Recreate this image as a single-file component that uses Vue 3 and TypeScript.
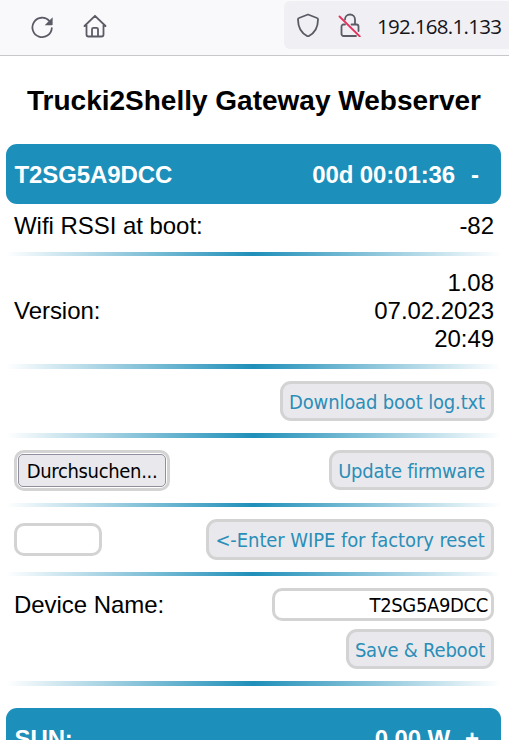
<script setup lang="ts">
import { ref } from 'vue'

const address = '192.168.1.133'
const deviceId = 'T2SG5A9DCC'
const uptime = '00d 00:01:36'
const rssi = -82
const version: string[] = ['1.08', '07.02.2023', '20:49']
const wipe = ref('')
const deviceName = ref(deviceId)
</script>

<template>
  <div class="window">
    <header class="toolbar">
      <svg class="icon reload" viewBox="0 0 24 24">
        <path class="line" d="M21.800 13.200A9.700 9.700 0 1 1 19.400 6" />
        <path class="solid" d="M22.600 2.300v7.100a.8.8 0 0 1-.8.8h-7.100z" />
      </svg>
      <svg class="icon home" viewBox="0 0 24 24">
        <path class="line" d="M1.500 12 12 1.800 22.500 12M3.500 10.200V20.500a2 2 0 0 0 2 2h13a2 2 0 0 0 2-2V10.200M9 22.500v-7.200a1.500 1.500 0 0 1 1.500-1.500h3a1.500 1.500 0 0 1 1.500 1.500v7.200" />
      </svg>
      <div class="address">
        <svg class="icon" viewBox="0 0 24 24">
          <path class="line" d="M12 1.500 21 5a1.500 1.500 0 0 1 1 1.500C22 15 18.500 20.500 12 23.500 5.500 20.500 2 15 2 6.500A1.500 1.500 0 0 1 3 5z" />
        </svg>
        <svg class="icon lock" viewBox="0 0 24 24">
          <path class="line" d="M7 6.500a5 5 0 0 1 10 0V11.500M13.500 11.500h5a2 2 0 0 1 2 2V18M18 23H5.500a2 2 0 0 1-2-2v-7.500a2 2 0 0 1 2-2H7" />
          <path class="slash" d="M1.500 3.500 21.800 23.500" />
        </svg>
        <span class="url">{{ address }}</span>
      </div>
    </header>

    <main>
      <h1>Trucki2Shelly Gateway Webserver</h1>

      <section>
        <div class="bar">
          <span>{{ deviceId }}</span>
          <span class="state">{{ uptime }}<b class="toggle">-</b></span>
        </div>
        <div class="row rssi"><span>Wifi RSSI at boot:</span><span>{{ rssi }}</span></div>
        <hr class="thin" />
        <div class="row version">
          <span>Version:</span>
          <div class="lines"><span v-for="part in version" :key="part">{{ part }}</span></div>
        </div>
        <hr />
        <div class="row download"><button class="btn log">Download boot log.txt</button></div>
        <hr />
        <div class="row firmware">
          <div class="file"><button class="browse">Durchsuchen...</button></div>
          <button class="btn update">Update firmware</button>
        </div>
        <hr class="thin" />
        <div class="row reset">
          <input v-model="wipe" class="field short" type="text" />
          <button class="btn wipe">&lt;-Enter WIPE for factory reset</button>
        </div>
        <hr class="thin" />
        <div class="row device">
          <span class="label">Device Name:</span>
          <div class="controls">
            <input v-model="deviceName" class="field long" type="text" />
            <button class="btn save">Save &amp; Reboot</button>
          </div>
        </div>
        <hr />
      </section>

      <section class="next">
        <div class="bar">
          <span>SUN:</span>
          <span class="state">0.00 W<b class="toggle plus">+</b></span>
        </div>
      </section>
    </main>
  </div>
</template>

<style>
body {
  margin: 0;
  background: #fff;
}
</style>

<style scoped>
* {
  box-sizing: border-box;
}
.window {
  height: 740px;
  overflow: hidden;
  background: #fff;
  color: #000;
  font: 24px/28px "Liberation Sans", Arial, sans-serif;
}
.toolbar {
  display: flex;
  align-items: flex-start;
  height: 56px;
  padding: 1px 0 0 30px;
  background: #f9f9fb;
  border-bottom: 1px solid #c8c8cb;
}
.icon {
  flex: none;
  width: 24px;
  height: 24px;
}
.line {
  fill: none;
  stroke: #5b5b66;
  stroke-width: 1.8;
  stroke-linejoin: round;
  stroke-linecap: round;
}
.solid {
  fill: #5b5b66;
}
.slash {
  fill: none;
  stroke: #e8305c;
  stroke-width: 1.8;
  stroke-linecap: round;
}
.reload {
  margin-top: 14px;
}
.home {
  margin: 13px 0 0 29px;
}
.address {
  display: flex;
  flex: 1;
  align-items: center;
  height: 48px;
  margin-left: 177px;
  padding-left: 12px;
  background: #f0f0f4;
  border-radius: 6px 0 0 6px;
}
.lock {
  margin-left: 18px;
}
.url {
  margin: 2px 0 0 15px;
  color: #15141a;
  font: 20.5px/28px "Open Sans", "Noto Sans", sans-serif;
  letter-spacing: -0.7px;
  white-space: nowrap;
}
main {
  padding: 0 7px 0 6px;
}
h1 {
  height: 88px;
  margin: 0;
  padding-top: 29px;
  font-size: 28px;
  line-height: 32px;
  text-align: center;
  white-space: nowrap;
}
.bar {
  display: flex;
  align-items: center;
  justify-content: space-between;
  height: 60px;
  margin-right: 1px;
  padding: 2px 22px 0 8.5px;
  border-radius: 11px;
  background: #1c90bb;
  color: #fff;
  font-weight: bold;
  letter-spacing: -0.1px;
}
.toggle {
  margin-left: 16px;
}
.plus {
  margin-left: 15px;
}
.row {
  display: flex;
  justify-content: space-between;
  padding: 0 8px;
}
hr {
  height: 5px;
  margin: 0 1px 0 0;
  border: 0;
  background: linear-gradient(90deg, #fff, #1f8fb9 50%, #fff);
}
.thin {
  height: 4px;
}
.rssi {
  height: 48px;
  padding-top: 8px;
}
.version {
  align-items: center;
  height: 108px;
  padding-top: 2px;
}
.lines {
  display: flex;
  flex-direction: column;
  align-items: flex-end;
}
.rssi,
.version,
.label {
  letter-spacing: -0.04px;
}
.download {
  justify-content: flex-end;
  height: 64px;
  padding-top: 12px;
}
.firmware {
  height: 65px;
  padding-top: 12px;
}
.reset {
  height: 65px;
  padding-top: 12px;
}
.btn,
.field,
.browse {
  font: 20px/26px "DejaVu Sans Condensed", "DejaVu Sans", sans-serif;
  font-stretch: condensed;
  white-space: nowrap;
}
.btn {
  height: 40px;
  padding: 1px 0 0;
  border: 3px solid #d3d3d3;
  border-radius: 11px;
  background: #e9e9ed;
  color: #2b8eb8;
}
.log {
  width: 214px;
  letter-spacing: -0.16px;
}
.update {
  width: 165px;
  letter-spacing: -0.26px;
}
.wipe {
  width: 288px;
  height: 41px;
  letter-spacing: -0.08px;
}
.save {
  width: 148px;
  letter-spacing: -0.2px;
}
.file {
  width: 156px;
  height: 41px;
  padding: 1px;
  border: 3px solid #d3d3d3;
  border-radius: 10px;
}
.browse {
  width: 148px;
  height: 33px;
  padding: 0;
  border: 1px solid #8f8f9d;
  border-radius: 5px;
  background: #e9e9ed;
  color: #000;
  letter-spacing: -0.33px;
}
.field {
  height: 33px;
  padding: 1px 3px 0;
  border: 3px solid #d3d3d3;
  border-radius: 10px;
  outline: 0;
  background: #fff;
  color: #000;
  text-align: right;
  letter-spacing: -0.35px;
}
.short {
  width: 88px;
  margin-top: 4px;
}
.long {
  width: 222px;
}
.device {
  height: 105px;
  padding-top: 12px;
}
.label {
  padding-top: 3px;
}
.controls {
  display: flex;
  flex-direction: column;
  gap: 8px;
  align-items: flex-end;
}
.next {
  margin-top: 22px;
}
</style>
